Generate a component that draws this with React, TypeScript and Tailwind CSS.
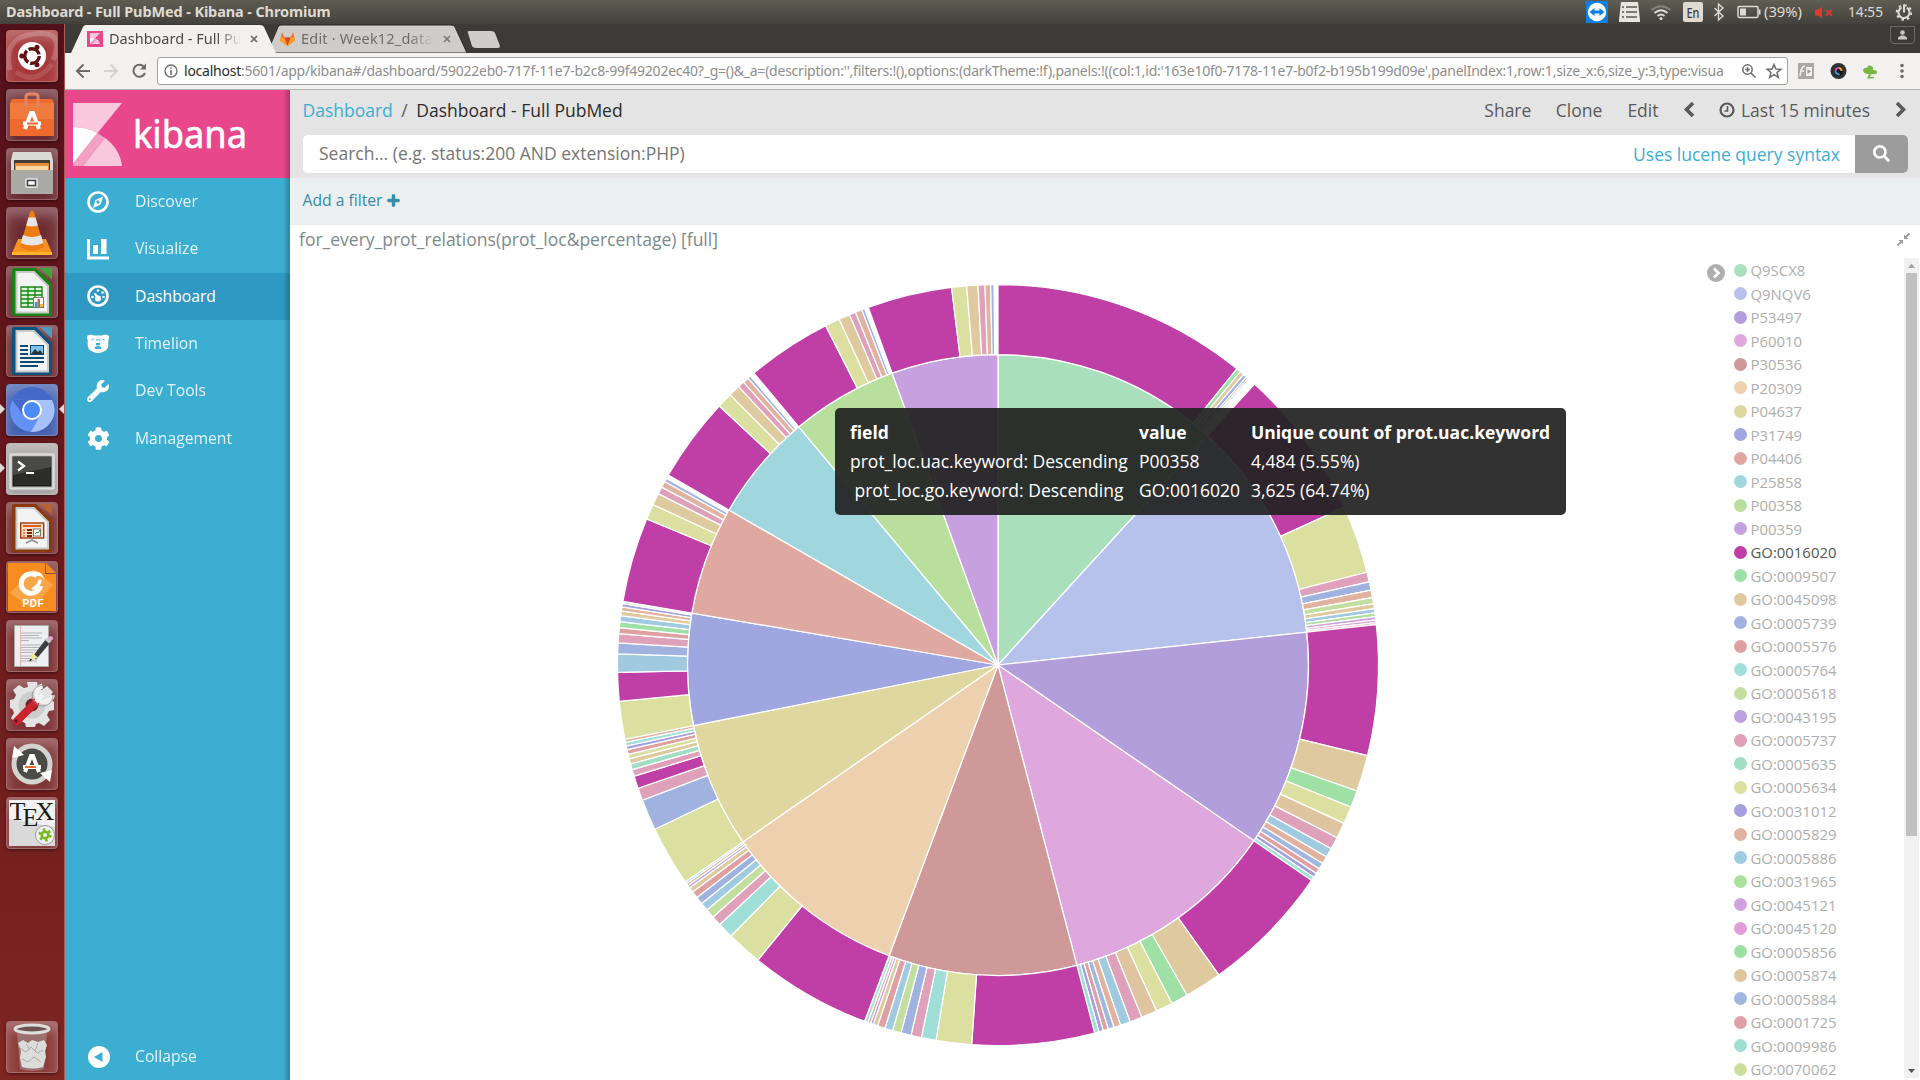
import type { ReactNode } from "react";
import {
  FaWrench,
  FaCog,
  FaPlus,
  FaSearch,
} from "react-icons/fa";

type Pt = [number, number];
type Slice = [string, number, number];

const C = {
  mag: "#bf3fa7",
  green: "#9fe0a6",
  tan: "#dfcaa0",
  blue: "#a0b2df",
  red: "#dfa0a2",
  teal: "#a0dfd8",
  lime: "#c3df9f",
  violet: "#bca0df",
  pink: "#dfa0ba",
  mint: "#a0dfc4",
  olive: "#dbdf9f",
  indigo: "#a49fdf",
  orange: "#dfb3a0",
  sky: "#a0cadf",
  leaf: "#ade09f",
  orchid: "#d1a0df",
  rose: "#dfa0da",
  sand: "#dfc4a0",
  steel: "#a0b8df",
};

/* Directions of the edges between proteins, clockwise from the top. */
const edges: Pt[] = [
  [0, -930], [629, -689], [929, -99], [770, 529], [237, 902], [-327, 873],
  [-766, 531], [-913, 182], [-919, -156], [-807, -465], [-597, -714], [-317, -874],
];

const innerColors = [
  "#a9e0bb", "#b7c2ec", "#b19edb", "#dea8df", "#cf9999", "#edd1ae",
  "#ded79f", "#a0a6df", "#dfa9a1", "#a0d7df", "#b9df9f", "#c6a0df",
];

/* Outer ring: colour and the direction in which the slice ends. */
const outer: Slice[][] = [
  [[C.mag, 714, -885], [C.green, 724.5, -876.5], [C.tan, 734, -868], [C.blue, 742, -860.5], [C.red, 747, -856.5], [C.teal, 751, -852.5]],
  [[C.mag, 850, -387], [C.olive, 1106, -278], [C.pink, 1112, -249], [C.blue, 1117, -224], [C.orange, 1122, -202], [C.lime, 1126, -184], [C.tan, 1128, -169], [C.sky, 1130, -156], [C.leaf, 1132, -145], [C.orchid, 1133, -135], [C.rose, 1133, -127], [C.orange, 1134, -121]],
  [[C.mag, 1108, 272], [C.tan, 1077, 378], [C.green, 1058, 426], [C.olive, 1036, 474], [C.sand, 1015, 517], [C.pink, 997, 550], [C.sky, 984, 575], [C.orange, 973, 595], [C.steel, 963, 611], [C.red, 954, 625], [C.indigo, 946, 636], [C.teal, 939, 646]],
  [[C.mag, 661, 928], [C.tan, 566, 989], [C.green, 521, 1014], [C.olive, 475, 1036], [C.sand, 431, 1056], [C.pink, 396, 1069], [C.sky, 367, 1079], [C.orange, 347, 1085], [C.steel, 330, 1090], [C.red, 315, 1095], [C.indigo, 302, 1098], [C.teal, 289, 1102]],
  [[C.mag, -79, 1138], [C.olive, -186, 1127], [C.teal, -230, 1118], [C.pink, -261, 1111], [C.blue, -291, 1104], [C.lime, -316, 1096], [C.sky, -339, 1089], [C.red, -361, 1082], [C.tan, -374, 1077], [C.violet, -382, 1074], [C.orange, -390, 1071], [C.teal, -398, 1066]],
  [[C.mag, -720, 885], [C.olive, -800, 812], [C.teal, -833, 777], [C.pink, -853, 754], [C.lime, -871, 733], [C.sky, -887, 714], [C.blue, -901, 696], [C.red, -914, 679], [C.tan, -923, 667], [C.violet, -928, 660], [C.orange, -933, 654], [C.teal, -937, 648]],
  [[C.olive, -1028, 492], [C.blue, -1065, 405], [C.pink, -1078, 369], [C.mag, -1090, 333], [C.pink, -1095, 313], [C.mint, -1100, 296], [C.tan, -1104, 281], [C.olive, -1108, 268], [C.red, -1112, 254], [C.indigo, -1114, 243], [C.teal, -1117, 232], [C.orange, -1119, 222]],
  [[C.olive, -1135, 109], [C.mag, -1140, 22], [C.sky, -1140, -33], [C.blue, -1139, -66], [C.pink, -1137, -94], [C.red, -1135, -112], [C.green, -1133, -130], [C.sky, -1131, -148], [C.tan, -1129, -162], [C.orange, -1127, -174], [C.indigo, -1125, -184], [C.leaf, -1124, -189]],
  [[C.mag, -1051, -437], [C.olive, -1032, -480], [C.tan, -1015, -512], [C.pink, -1006, -532], [C.orange, -997, -549], [C.blue, -992, -558]],
  [[C.mag, -834, -775], [C.olive, -801, -808], [C.tan, -775, -832], [C.pink, -760, -845], [C.orange, -747, -857], [C.blue, -740, -863]],
  [[C.mag, -515, -1014], [C.olive, -475, -1034], [C.tan, -444, -1048], [C.pink, -426, -1055], [C.orange, -407, -1062], [C.blue, -399, -1066]],
  [[C.mag, -139, -1131], [C.olive, -94, -1136], [C.tan, -60, -1138], [C.pink, -39, -1139], [C.orange, -22, -1140], [C.blue, -12, -1140]],
];

const legend: [string, string][] = [
  ["Q9SCX8", "#a9e0bb"], ["Q9NQV6", "#b7c2ec"], ["P53497", "#b19edb"], ["P60010", "#dea8df"],
  ["P30536", "#cf9999"], ["P20309", "#edd1ae"], ["P04637", "#ded79f"], ["P31749", "#a0a6df"],
  ["P04406", "#dfa9a1"], ["P25858", "#a0d7df"], ["P00358", "#b9df9f"], ["P00359", "#c6a0df"],
  ["GO:0016020", "#bf3fa7"], ["GO:0009507", "#9fe0a8"], ["GO:0045098", "#dfcaa0"], ["GO:0005739", "#a0b2df"],
  ["GO:0005576", "#dfa0a2"], ["GO:0005764", "#a0dfdc"], ["GO:0005618", "#c3df9f"], ["GO:0043195", "#bca0df"],
  ["GO:0005737", "#dfa0ba"], ["GO:0005635", "#a0dfc4"], ["GO:0005634", "#dbdf9f"], ["GO:0031012", "#a49fdf"],
  ["GO:0005829", "#dfb3a0"], ["GO:0005886", "#a0cadf"], ["GO:0031965", "#ade09f"], ["GO:0045121", "#d1a0df"],
  ["GO:0045120", "#dfa0da"], ["GO:0005856", "#9fdfa4"], ["GO:0005874", "#dfc4a0"], ["GO:0005884", "#a0b8df"],
  ["GO:0001725", "#dfa0a8"], ["GO:0009986", "#a0dfd6"], ["GO:0070062", "#ccdfa0"],
];

function angle(x: number, y: number) {
  const a = Math.atan2(x, -y);
  return a < -1e-9 ? a + Math.PI * 2 : a;
}

function sector(r0: number, r1: number, a0: number, a1: number) {
  const p = (r: number, a: number) => `${(Math.sin(a) * r).toFixed(2)} ${(-Math.cos(a) * r).toFixed(2)}`;
  if (r0 === 0) return `M0 0L${p(r1, a0)}A${r1} ${r1} 0 0 1 ${p(r1, a1)}Z`;
  return `M${p(r0, a0)}L${p(r1, a0)}A${r1} ${r1} 0 0 1 ${p(r1, a1)}L${p(r0, a1)}A${r0} ${r0} 0 0 0 ${p(r0, a0)}Z`;
}

function Pie() {
  const starts = edges.map(([x, y]) => angle(x, y));
  return (
    <svg width="1416" height="824" viewBox="-708 -411 1416 824" className="block">
      <g stroke="#fff" strokeWidth="1.25">
        {starts.map((s, i) => (
          <path key={i} d={sector(0, 310.5, s, i === 11 ? Math.PI * 2 : starts[i + 1])} fill={innerColors[i]} />
        ))}
        {outer.map((group, i) => {
          let a = starts[i];
          return group.map(([color, x, y], j) => {
            const from = a;
            a = angle(x, y);
            return <path key={`${i}-${j}`} d={sector(310.5, 380.5, from, a)} fill={color} />;
          });
        })}
      </g>
    </svg>
  );
}

/* ---------- Launcher ---------- */

function Tile({ children, className = "bg-[#ffffff1c]" }: { children: ReactNode; className?: string }) {
  return (
    <div className={`h-[52px] w-[52px] shrink-0 overflow-hidden rounded-[4px] border border-white/25 shadow-[inset_0_8px_12px_rgba(255,255,255,0.28),0_1px_3px_rgba(0,0,0,0.5)] ${className}`}>
      <svg width="50" height="50" viewBox="1 1 50 50">{children}</svg>
    </div>
  );
}

function OfficeDoc({ dark, light, children }: { dark: string; light: string; children: ReactNode }) {
  return (
    <>
      <path d="M8 2H30L46 18V48a2 2 0 0 1-2 2H8a2 2 0 0 1-2-2V4a2 2 0 0 1 2-2z" fill={dark} />
      <path d="M34 2H46V14z" fill={light} />
      <path d="M10.500 6H28L42 20V46.500H10.500z" fill="#f3f3f3" stroke="#c9c9c9" strokeWidth="2" />
      {children}
    </>
  );
}

function Launcher() {
  return (
    <aside className="relative flex w-[65px] shrink-0 flex-col border-r border-[#a85a55] bg-gradient-to-b from-[#54101a] via-[#6a191c] to-[#7d2622] pb-[7px] pl-[6px] pt-[6px]">
      <div className="flex flex-col gap-[7px]">
        <Tile className="bg-[#a5383a]">
          <path d="M4 40Q-4 8 28 4T47 30" fill="none" stroke="#ffffff30" strokeWidth="5" />
          <path d="M10 42Q30 56 46 34" fill="none" stroke="#ffffff20" strokeWidth="5" />
          <circle cx="26" cy="26" r="14" fill="#fff" />
          <circle cx="26" cy="26" r="7.300" fill="none" stroke="#5e1218" strokeWidth="3.400" strokeDasharray="13.300 2" />
          <circle cx="15.800" cy="26" r="2.500" fill="#5e1218" />
          <circle cx="31" cy="17.200" r="2.500" fill="#5e1218" />
          <circle cx="31" cy="34.800" r="2.500" fill="#5e1218" />
        </Tile>
        <Tile>
          <path d="M4 14L6 10H46L48 14V47H4z" fill="#ee6a2e" />
          <path d="M4 14H48V30H4z" fill="#ef7b3e" />
          <path d="M20 18V9a3 3 0 0 1 3-4h6a3 3 0 0 1 3 4v9" fill="none" stroke="#e58464" strokeWidth="3" />
          <path d="M19 40L25 24h2l6 16M17 34.500h18" fill="none" stroke="#fff" strokeWidth="4" />
          <path d="M21 34.500h11" stroke="#ee6a2e" strokeWidth="2" />
        </Tile>
        <Tile>
          <path d="M7 4H45L47 12V44H5V12z" fill="#d9d9d6" />
          <path d="M8 12H44V24H8z" fill="#423b38" />
          <path d="M9 15H43V22H9z" fill="#e88b38" />
          <path d="M10 18H42V24H10z" fill="#fbd9a2" />
          <path d="M5 22H47V46H5z" fill="#a9a9a6" />
          <rect x="19" y="30" width="13" height="10" rx="2" fill="#ddd" />
          <rect x="21.500" y="32.500" width="8" height="5" fill="#fff" stroke="#444" strokeWidth="1.500" />
        </Tile>
        <Tile>
          <path d="M12 32H40L46 46a2 2 0 0 1-2 2H8a2 2 0 0 1-2-2z" fill="#f7931e" />
          <path d="M6 45H46V48H6z" fill="#ffb42a" />
          <path d="M24 5q2-3 4 0L38 40q-12 7-24 0z" fill="#f07c12" />
          <path d="M22.500 10.500h7l2.300 8q-6 2-11.600 0zM17 28q9 4 18 0l2.300 8q-11 5-22.600 0z" fill="#e6e6e6" />
        </Tile>
        <Tile>
          <OfficeDoc dark="#168413" light="#40a534">
            <rect x="15" y="21" width="21" height="20" fill="#dff5d8" />
            <path d="M15 21H36V41H15zM15 25h21M15 29h21M15 33h21M15 37h21M22 21v20M29 21v20" fill="none" stroke="#168413" strokeWidth="1.300" />
            <rect x="27.500" y="31.500" width="10" height="10" fill="#fff" stroke="#777" />
            <path d="M30 36v5" stroke="#2595e8" strokeWidth="2.500" />
            <path d="M32.700 33v8" stroke="#d8601c" strokeWidth="2.500" />
            <path d="M35.500 38v3" stroke="#e8b51c" strokeWidth="2.500" />
          </OfficeDoc>
        </Tile>
        <Tile>
          <OfficeDoc dark="#0c5382" light="#4f98bf">
            <path d="M14 21h8M14 25h8M14 29h8M14 33h24M14 37h24M14 41h18" stroke="#0b4b76" strokeWidth="1.900" />
            <rect x="24.500" y="20.500" width="13" height="9" fill="#7dc3ea" stroke="#0c4a75" />
            <path d="M25 29l4-5 3 3 2-2 3 4z" fill="#333" />
          </OfficeDoc>
        </Tile>
        <Tile className="bg-[#4561ae]">
          <circle cx="26" cy="26" r="22" fill="#6492f4" />
          <path d="M6 15.500A22 22 0 0 1 46 16H26z" fill="#4469c9" />
          <path d="M6 15.500L17 31 26 16z" fill="#4469c9" />
          <path d="M26 16H46A22 22 0 0 1 25 48L35 30z" fill="#a5c2fb" />
          <circle cx="26" cy="26" r="9" fill="#4b8bf5" stroke="#fff" strokeWidth="2" />
        </Tile>
        <Tile className="bg-[#a9a6a5]">
          <rect x="4" y="11" width="44" height="35" rx="1" fill="#c9c9c7" stroke="#eee" />
          <rect x="7" y="14" width="38" height="29" fill="#2c2c2b" stroke="#111" />
          <path d="M7 14H45V24L7 32z" fill="#4a4a49" />
          <path d="M12 18.500l6 4.500-6 4.500" fill="none" stroke="#fff" strokeWidth="2.200" />
          <path d="M20 30h8" stroke="#fff" strokeWidth="2" />
        </Tile>
        <Tile>
          <OfficeDoc dark="#8a3a0c" light="#b5632f">
            <rect x="14.700" y="21" width="23" height="15" fill="#f8ddcb" stroke="#a03a0c" strokeWidth="1.400" />
            <path d="M17 24h18" stroke="#d8601c" strokeWidth="2" />
            <path d="M17 28h2M17 31h2M17 34h2" stroke="#e06a2c" strokeWidth="1.600" />
            <path d="M21 28h5M21 31h5M21 34h5" stroke="#7a2a06" strokeWidth="1.800" />
            <rect x="27.500" y="27" width="7" height="7" fill="#fff" stroke="#777" />
            <path d="M29 32l2-2 1 1 2-3" stroke="#2a9a2a" fill="none" />
            <path d="M26 36v3M20 41l6-3 6 3" fill="none" stroke="#888" strokeWidth="1.500" />
          </OfficeDoc>
        </Tile>
        <Tile>
          <path d="M2 2H39V13H50V50H2z" fill="#f78d1e" />
          <path d="M4 32L28 8 47 24 26 48z" fill="#f9a54a" />
          <path d="M40 2L50 12H40z" fill="#f78d1e" />
          <circle cx="25" cy="22.500" r="9.800" fill="none" stroke="#fff" strokeWidth="5" strokeDasharray="50 11.600" transform="rotate(14 25 22.500)" />
          <path d="M28 10.500q8-1 10.500 8-3-4-7-3.500z" fill="#fff" />
          <path d="M25 27q5-1 8-9l3 1q-2 8-9 10z" fill="#fff" />
          <text x="27" y="46" textAnchor="middle" fontSize="10" fontWeight="700" fill="#fff" fontFamily="Liberation Sans, sans-serif" textLength="21">PDF</text>
        </Tile>
        <Tile>
          <path d="M8.500 5.500H42.500V46.500H8.500z" fill="#eceef2" stroke="#aaa" />
          <path d="M14.500 6V46" stroke="#e8b8b8" />
          <path d="M15 13h21M15 15.500h18M15 18h21M15 20.500h8M15 25h21M15 27.500h20M15 30h20M15 32.500h12M15 36h12M15 38.500h9M15 41h16" stroke="#a3a3a3" strokeWidth="0.800" />
          <path d="M25.500 38L40 19l4 4-14 16.500z" fill="#3c3c3c" />
          <path d="M23.500 41l3-8 5.500 4.500z" fill="#efe9a0" />
          <path d="M23 41.500l1.500-3 1.800 1.500z" fill="#222" />
          <path d="M39 20l3-2.500 3.500 3.500-2.500 2.500z" fill="#c9c9c9" />
          <path d="M41.500 17.500l3-1.500q3 .5 2.500 3l-2 2z" fill="#e5a5d5" />
        </Tile>
        <Tile>
          <path d="M21 3h10l1 6 4 2 5-4 6 6-4 5 2 4 3 .500V31l-5 1-2 4 3 5-6 6-5-3-3 1-1 3H20l-1-4-4-2-4 3-6-6 3-5-1.500-4-2.500-1V21l4-1 2-4-3-5 6-5 5 3 4-1z" fill="#e3e3e3" />
          <circle cx="26" cy="26" r="10" fill="none" stroke="#cdcdcd" strokeWidth="7" />
          <circle cx="26" cy="26" r="6.500" fill="#6e2426" />
          <path d="M11 42L29 24" stroke="#c9242b" strokeWidth="8" strokeLinecap="round" />
          <path d="M30 23L37 16M36.500 7a8 8 0 1 0 10 9" fill="none" stroke="#f1f1f1" strokeWidth="5" />
          <path d="M39 6.500a10.500 10.500 0 1 0 8 9" fill="none" stroke="#8e8e8e" strokeWidth="0.800" />
          <circle cx="10" cy="42" r="1.700" fill="#6b1115" />
        </Tile>
        <Tile>
          <circle cx="26" cy="26" r="18" fill="#4a4b46" stroke="#d3d3d1" strokeWidth="5" />
          <path d="M6 20L8 8l10 9zM46 32l-2 12-10-9z" fill="#fff" />
          <path d="M19 34L25 18h2l6 16M17 29h18" fill="none" stroke="#fff" strokeWidth="4" />
          <path d="M19 29h11" stroke="#ee6a2e" strokeWidth="2.200" />
        </Tile>
        <Tile>
          <path d="M3 3H49V49H3z" fill="#d9d9d9" />
          <path d="M3 3H49V30L3 22z" fill="#f1f1f1" />
          <text x="3.500" y="23" fontSize="26" fill="#1b1b1b" fontFamily="Liberation Serif, serif">T<tspan x="16.500" dy="6">E</tspan><tspan x="29.500" dy="-6">X</tspan></text>
          <circle cx="39" cy="38" r="9.500" fill="#f1f1f1" stroke="#999" />
          <circle cx="39" cy="38" r="3.300" fill="none" stroke="#79b618" strokeWidth="2.600" />
          <circle cx="39" cy="38" r="5.500" fill="none" stroke="#79b618" strokeWidth="2.400" strokeDasharray="2.500 3.260" />
        </Tile>
      </div>
      <div className="mt-auto">
        <Tile>
          <path d="M11 12L14 48q12 4 24 0l3-36z" fill="#9b6f6d" />
          <path d="M12 22l5-3 5 3 4-3 6 2 6-2 3 5-2 6 1 6-3 10q-10 3-21 0l-2-9 1-7z" fill="#dcdcda" />
          <path d="M14 27l6 4 5-5 6 6 6-3M16 38l6 3 6-5 7 5M20 23l4 6M32 22l-3 8" stroke="#aaa" fill="none" />
          <ellipse cx="26" cy="8" rx="17" ry="4" fill="#6d5452" stroke="#dededd" strokeWidth="3" />
        </Tile>
      </div>
      <svg width="65" height="80" className="absolute left-0 top-[346px]">
        <path d="M0 34l5 5-5 5zM64 34l-5 5 5 5z" fill="#e0d8d8" />
      </svg>
      <svg width="8" height="14" className="absolute left-0 top-[437px]">
        <path d="M0 2l5 5-5 5z" fill="#e0d8d8" />
      </svg>
    </aside>
  );
}

/* ---------- Desktop bar ---------- */

function TopBar() {
  return (
    <div className="flex h-6 w-full shrink-0 items-center bg-gradient-to-b from-[#605d52] to-[#43413c] pl-[6px] font-[Noto_Sans,sans-serif] text-[15px] text-[#dfdbd2]">
      <span className="whitespace-nowrap text-[14.5px] font-bold tracking-[-0.12px]">Dashboard - Full PubMed - Kibana - Chromium</span>
      <svg width="328" height="24" viewBox="1584 0 328 24" className="ml-auto mr-[8px]">
        <rect x="1586" y="1" width="22" height="22" fill="#0d80e4" />
        <circle cx="1597" cy="12" r="9.200" fill="#fff" />
        <path d="M1589.500 12l5-4v2.500h5V8l5 4-5 4v-2.500h-5V16z" fill="#0d80e4" />
        <path d="M1621 2h17l2 18v2h-21v-2z" fill="#e9e6df" />
        <path d="M1622 7h2M1626 7h11M1622 12h2M1626 12h11M1622 17h2M1626 17h11" stroke="#5a5851" strokeWidth="1.500" />
        <g fill="none" stroke="#dfdbd2" strokeWidth="1.800">
          <path d="M1651.500 10q9.500-7.500 19 0" stroke="#85827a" />
          <path d="M1654.500 13q6.500-5.500 13 0M1657.500 16q3.500-3 7 0" />
          <path d="M1714.500 8l8.500 8-4.500 4V4l4.500 4-8.500 8" strokeWidth="1.400" />
        </g>
        <circle cx="1661" cy="18.500" r="1.600" fill="#dfdbd2" />
        <rect x="1683" y="2" width="20" height="20" rx="2" fill="#dfdbd2" />
        <text x="1693" y="17.500" textAnchor="middle" fontSize="14" fontWeight="500" fill="#3c3b37" textLength="13" lengthAdjust="spacingAndGlyphs">En</text>
        <rect x="1738" y="6.500" width="20" height="11" rx="1.500" fill="none" stroke="#dfdbd2" strokeWidth="1.500" />
        <path d="M1740 8.500h6v7h-6zM1759 9.500h1.500v5h-1.500z" fill="#dfdbd2" />
        <text x="1764" y="17" fontSize="14.500" fill="#dfdbd2" textLength="38" lengthAdjust="spacingAndGlyphs">(39%)</text>
        <path d="M1815 9.500h3l4-3v12l-4-3h-3z" fill="#df382c" />
        <path d="M1826 10l6 5.500M1832 10l-6 5.500" stroke="#df382c" strokeWidth="1.800" />
        <text x="1848" y="17" fontSize="14.500" fill="#dfdbd2" textLength="35" lengthAdjust="spacingAndGlyphs">14:55</text>
        <circle cx="1904" cy="12.500" r="5.500" fill="none" stroke="#dfdbd2" strokeWidth="2" strokeDasharray="28.500 6" transform="rotate(-60 1904 12.500)" />
        <circle cx="1904" cy="12.500" r="7.300" fill="none" stroke="#dfdbd2" strokeWidth="2" strokeDasharray="2.500 3.230" />
        <path d="M1904 4.500v8" stroke="#dfdbd2" strokeWidth="2" />
      </svg>
    </div>
  );
}

/* ---------- Browser ---------- */

function KibanaMark({ width, height }: { width: number; height: number }) {
  return (
    <svg width={width} height={height} viewBox="0 0 49 63" preserveAspectRatio="none" className="shrink-0">
      <path d="M0 0H49L24.500 30Q14 24 0 24z" fill="#f9c8dc" />
      <path d="M0 24Q14 24 24.500 30L0 61z" fill="#fff" />
      <path d="M24.500 30L32 35 10 63H0V61z" fill="#f3a0c4" />
      <path d="M32 35Q47 46 49 63H10z" fill="#f9c8dc" />
    </svg>
  );
}

function TabStrip() {
  return (
    <div className="relative flex h-[29px] shrink-0 bg-[#3c3b37] font-[Noto_Sans,sans-serif] text-[14.5px]">
      <svg width="440" height="29" className="absolute left-0 top-0">
        <path d="M202 29L213 3q1-2 3-2H386q3 0 4 2L402 29z" fill="#cfcdca" stroke="#2e2d2a" />
        <path d="M403 9q-1-2 1-2H426q3 0 4 2l5 13q0 2-2 2H411q-3 0-4-2z" fill="#cfcdca" />
        <path d="M6 29L18 3q1-2 3-2H195q3 0 4 2L211 29z" fill="#f2f1f0" />
      </svg>
      <div className="relative flex h-full w-[202px] items-center pl-[22px]">
        <div className="flex h-4 w-4 items-center justify-center bg-[#e8478b]"><KibanaMark width={10} height={11} /></div>
        <span className="ml-[6px] w-[135px] whitespace-nowrap text-[#4a4a48] [mask-image:linear-gradient(to_right,black_80%,transparent_98%)]">Dashboard - Full Pu</span>
        <svg width="8" height="8" className="ml-[6px]"><path d="M1 1l6 6M7 1l-6 6" stroke="#6d6c69" strokeWidth="1.700" /></svg>
      </div>
      <div className="relative flex h-full w-[190px] items-center pl-[12px]">
        <svg width="17" height="16" viewBox="0 0 17 16">
          <path d="M8.500 15L1 9.500 3 1l2.300 5.500h6.400L14 1l2 8.500z" fill="#fc6d26" />
          <path d="M8.500 15L5.300 6.500h6.400z" fill="#e24329" />
          <path d="M1 9.500L2 6.500h3.300L8.500 15zM16 9.500l-1-3h-3.300L8.500 15z" fill="#fca326" />
        </svg>
        <span className="ml-[5px] w-[135px] whitespace-nowrap tracking-[0.2px] text-[#6e6c69] [mask-image:linear-gradient(to_right,black_80%,transparent_98%)]">Edit · Week12_data</span>
        <svg width="8" height="8" className="ml-[7px]"><path d="M1 1l6 6M7 1l-6 6" stroke="#7d7b78" strokeWidth="1.700" /></svg>
      </div>
      <div className="relative ml-auto mr-[5px] mt-[2px] flex h-[18px] w-[25px] items-center justify-center rounded-b-[4px] border border-[#6b6a66]">
        <svg width="11" height="10"><circle cx="5.500" cy="2.500" r="2.300" fill="#c9c7c3" /><path d="M1 9.500V7.500l3-2h3l3 2v2z" fill="#c9c7c3" /></svg>
      </div>
    </div>
  );
}

function Toolbar() {
  return (
    <div className="flex h-[37px] shrink-0 items-center border-b border-[#b6b4b1] bg-[#f2f1f0] pb-[1px]">
      <svg width="92" height="28" fill="none" strokeWidth="2" className="shrink-0">
        <path d="M25 14H12M18.500 7.500L12 14l6.500 6.500" stroke="#6c6b69" />
        <path d="M39 14H52M45.500 7.500L52 14l-6.500 6.500" stroke="#d3d2d0" />
        <path d="M79.500 10.500A6 6 0 1 0 80 16" stroke="#6c6b69" />
        <path d="M81 6.500v6h-6z" fill="#6c6b69" />
      </svg>
      <div className="flex h-[28px] w-[1631px] shrink-0 items-center rounded-[3px] border border-[#a5a3a1] bg-white pl-[6px]">
        <svg width="14" height="14" fill="none" stroke="#6c6b69" strokeWidth="1.300"><circle cx="7" cy="7" r="6" /><path d="M7 6v5M7 3.200v1.500" strokeWidth="1.600" /></svg>
        <div className="ml-[6px] w-[1549px] whitespace-nowrap font-[Noto_Sans,sans-serif] text-[14px] tracking-[-0.235px] text-[#8e8d8b]">
          <span className="text-[#2c2c2a]">localhost</span>
          {":5601/app/kibana#/dashboard/59022eb0-717f-11e7-b2c8-99f49202ec40?_g=()&_a=(description:'',filters:!(),options:(darkTheme:!f),panels:!((col:1,id:'163e10f0-7178-11e7-b0f2-b195b199d09e',panelIndex:1,row:1,size_x:6,size_y:3,type:visua"}
        </div>
        <svg width="44" height="16" fill="none" stroke="#6c6b69" strokeWidth="1.500" className="ml-[8px]">
          <circle cx="6.500" cy="6.500" r="4.700" /><path d="M10 10l4.500 4.500M4 6.500h5M6.500 4v5" />
          <path d="M33 1.500l1.900 4.600 4.900.3-3.800 3.100 1.300 4.800L33 11.600l-4.300 2.700L30 9.500l-3.800-3.100 4.900-.3z" />
        </svg>
      </div>
      <svg width="120" height="20" className="ml-[10px]">
        <rect x="0" y="2" width="16" height="16" fill="#aaa8a5" />
        <path d="M2 15Q3 5 7 5M3 10h3" fill="none" stroke="#f2f1f0" strokeWidth="1.600" />
        <path d="M8 6h6v9H8z" fill="#f2f1f0" />
        <path d="M9.500 8l3.500 2.500-3.500 2.500z" fill="#9a9895" />
        <circle cx="40.500" cy="10" r="8" fill="#2f3236" /><circle cx="40.500" cy="10" r="4.500" fill="#111" />
        <path d="M37.500 10a3 3 0 0 1 3-3" stroke="#d53ad5" strokeWidth="2" fill="none" /><path d="M40.500 7a3 3 0 0 1 3 3" stroke="#e9a52a" strokeWidth="2" fill="none" /><path d="M37.500 10a3 3 0 0 0 4 3" stroke="#29a8e0" strokeWidth="2" fill="none" />
        <path d="M65 9q1-3 4-2 1-4 4-2 3 1 2 4 5 0 4 3-2 2-6 1l-1 3h4v1.500h-7l2-4.500q-6 0-6-4z" fill="#76b843" />
        <circle cx="104" cy="4.500" r="1.800" fill="#6c6b69" /><circle cx="104" cy="10" r="1.800" fill="#6c6b69" /><circle cx="104" cy="15.500" r="1.800" fill="#6c6b69" />
      </svg>
    </div>
  );
}

/* ---------- Kibana ---------- */

const navIcons: Record<string, ReactNode> = {
  Discover: (
    <svg width="22" height="22"><circle cx="11" cy="11" r="9.500" fill="none" stroke="#fff" strokeWidth="2.600" /><path d="M16 5.500l-2.500 8-7.500 3.500 2.500-8z" fill="#fff" /><circle cx="11" cy="11" r="1.700" fill="#3caed2" /></svg>
  ),
  Visualize: (
    <svg width="22" height="22" fill="#fff"><path d="M0 1h3v17.500h19V21.500H0zM6 7h5v9H6zM14 1h5.500v15H14z" /></svg>
  ),
  Dashboard: (
    <svg width="22" height="22" fill="#fff"><circle cx="11" cy="11" r="9.500" fill="none" stroke="#fff" strokeWidth="2.600" /><circle cx="11" cy="13.500" r="3" /><path d="M6.500 8.500l2-.5 4.500 5-2 2z" /><circle cx="11" cy="5.500" r="1.300" /><circle cx="15.500" cy="7.500" r="1.300" /><circle cx="16.500" cy="12" r="1.300" /><circle cx="5.500" cy="12" r="1.300" /></svg>
  ),
  Timelion: (
    <svg width="22" height="20"><path d="M0 2.500Q0 1 2 1q3-.8 5 .5h8q2-1.300 5-.5 2 0 2 1.500v2.500l-.700 1v6q-.500 3.500-4.500 5.500-3 1.500-5.800 1.500t-5.800-1.500Q1.200 15.500.7 12V6L0 5z" fill="#fff" /><path d="M9 6h4M4.500 6l2-1M15.500 5l2 1" stroke="#3caed2" strokeWidth="1" /><path d="M7.500 15q0-3 3.500-3t3.500 3z" fill="#3caed2" /><rect x="9" y="9" width="4" height="2.300" fill="#3caed2" /></svg>
  ),
  "Dev Tools": <FaWrench size={22} />,
  Management: <FaCog size={23} />,
};

function Sidebar() {
  return (
    <nav className="relative flex w-[225px] shrink-0 flex-col bg-[#3caed2] font-[Open_Sans,sans-serif] text-[15.7px] text-white">
      <div className="flex h-[88px] shrink-0 items-center bg-[#e8478b] pl-2">
        <KibanaMark width={49} height={63} />
        <svg width="140" height="70" className="ml-[10px]">
          <text x="1" y="49" fontSize="38" fill="#fff" stroke="#fff" strokeWidth="0.600" fontFamily="Noto Sans, sans-serif" textLength="114" lengthAdjust="spacingAndGlyphs">kibana</text>
        </svg>
      </div>
      {Object.keys(navIcons).map((name) => (
        <div key={name} className={`flex h-[47.4px] shrink-0 items-center pl-[22px] ${name === "Dashboard" ? "bg-[#3099c3]" : ""}`}>
          <span className="flex w-[48px]">{navIcons[name]}</span>
          <span className={name === "Dashboard" ? "" : "opacity-85"}>{name}</span>
        </div>
      ))}
      <div className="mt-auto flex h-[47px] items-center pl-[23px]">
        <svg width="22" height="22" className="mr-[25px]"><circle cx="11" cy="11" r="11" fill="#fff" /><path d="M14.500 6v10L6 11z" fill="#3caed2" /></svg>
        <span className="opacity-85">Collapse</span>
      </div>
      <div className="absolute inset-y-0 right-0 w-[7px] bg-gradient-to-r from-transparent to-black/25" />
    </nav>
  );
}

function Header() {
  return (
    <div className="flex h-[88px] shrink-0 flex-col bg-[#e4e4e4] text-[17.5px] text-[#5a5a5a]">
      <div className="flex h-[45px] items-center pb-[5px] pl-[12.5px]">
        <span className="text-[#3caed2]">Dashboard</span>
        <span className="mx-[8.5px]">/</span>
        <span className="text-[#2d2d2d]">Dashboard - Full PubMed</span>
        <span className="ml-auto">Share</span>
        <span className="ml-[24.5px]">Clone</span>
        <span className="ml-[25px]">Edit</span>
        <svg width="12" height="18" className="ml-[25px]"><path d="M10 2L3.500 8.500 10 15" fill="none" stroke="#5a5a5a" strokeWidth="3.600" /></svg>
        <svg width="16" height="16" fill="none" stroke="#5a5a5a" className="ml-[24px]"><circle cx="8" cy="8" r="6.500" strokeWidth="2.200" /><path d="M8.500 4v5H5.500" strokeWidth="1.600" /></svg>
        <span className="ml-[5.5px]">Last 15 minutes</span>
        <svg width="12" height="18" className="ml-[25px] mr-[13px]"><path d="M2 2l6.500 6.500L2 15" fill="none" stroke="#5a5a5a" strokeWidth="3.600" /></svg>
      </div>
      <div className="ml-[13px] mr-3 flex h-[38px] overflow-hidden rounded-[5px] bg-white">
        <span className="flex items-center pb-[2px] pl-[16px] text-[#757575]">Search... (e.g. status:200 AND extension:PHP)</span>
        <span className="ml-auto flex items-center pr-[15px] text-[#3caed2]">Uses lucene query syntax</span>
        <span className="flex w-[53px] items-center justify-center bg-[#9c9c9c] pb-[1px] text-white"><FaSearch size={17} /></span>
      </div>
    </div>
  );
}

function Tooltip() {
  return (
    <div className="absolute left-[545px] top-[154px] h-[107px] w-[731px] rounded-[5px] bg-[#222222]/93 px-[15px] pt-[10px] text-[17.5px] text-white">
      <div className="grid grid-cols-[279px_102px_300px] gap-x-[10px] whitespace-nowrap leading-[29px]">
        <b>field</b>
        <b>value</b>
        <b>Unique count of prot.uac.keyword</b>
        <span>prot_loc.uac.keyword: Descending</span>
        <span>P00358</span>
        <span>4,484 (5.55%)</span>
        <span className="pl-[4.500px]">prot_loc.go.keyword: Descending</span>
        <span>GO:0016020</span>
        <span>3,625 (64.74%)</span>
      </div>
    </div>
  );
}

function Panel() {
  return (
    <div className="flex min-h-0 flex-1 flex-col bg-white">
      <div className="flex h-[29px] shrink-0 items-center pl-[9px] pr-[10px] text-[17.5px] text-[#7b8a8e]">
        for_every_prot_relations(prot_loc&amp;percentage) [full]
        <svg width="13" height="13" className="ml-auto"><path d="M12.500.5L8 5M.5 12.500L5 8" stroke="#999ca0" strokeWidth="1.800" /><path d="M7 1.500V6h4.500zM6 11.500V7H1.500z" fill="#999ca0" /></svg>
      </div>
      <div className="relative flex min-h-0 flex-1 overflow-hidden">
        <div className="w-[1416px] shrink-0"><Pie /></div>
        <div className="ml-[1px] mt-[10px] w-[18px] shrink-0">
          <svg width="18" height="18" className="block"><circle cx="9" cy="9" r="9" fill="#aeaeae" /><path d="M7 4.500L11.500 9 7 13.500" fill="none" stroke="#fff" strokeWidth="2.600" /></svg>
        </div>
        <div className="ml-[9px] flex-1 pt-[4.500px]">
          {legend.map(([name, color]) => (
            <div key={name} className="flex h-[23.5px] items-center gap-[3.5px]">
              <span className="h-[13px] w-[13px] rounded-full" style={{ backgroundColor: color }} />
              <span className={`text-[14.9px] ${name === "GO:0016020" ? "text-[#555]" : "text-[#aeaeae]"}`}>{name}</span>
            </div>
          ))}
        </div>
        <div className="mb-[2px] mr-[1px] mt-[4px] flex w-[15px] shrink-0 flex-col items-center bg-[#f1f1f1]">
          <svg width="15" height="15" className="shrink-0"><path d="M4 10l3.500-4.500L11 10z" fill="#a3a3a3" /></svg>
          <div className="h-[563px] w-[11px] bg-[#c1c1c1]" />
          <svg width="15" height="15" className="mt-auto shrink-0"><path d="M4 6l3.500 4L11 6z" fill="#505050" /></svg>
        </div>
        <Tooltip />
      </div>
    </div>
  );
}

export default function App() {
  return (
    <div className="flex h-[1080px] w-[1920px] flex-col overflow-hidden bg-white">
      <TopBar />
      <div className="flex min-h-0 flex-1">
        <Launcher />
        <div className="flex min-w-0 flex-1 flex-col">
          <TabStrip />
          <Toolbar />
          <div className="flex min-h-0 flex-1">
            <Sidebar />
            <main className="flex min-w-0 flex-1 flex-col font-[Open_Sans,sans-serif]">
              <Header />
              <div className="flex h-[47px] shrink-0 items-center bg-[#ebeff0] pb-[2px] pl-[12.5px] text-[15.7px] text-[#328caa]">
                Add a filter
                <FaPlus size={13} className="ml-[4px]" stroke="currentColor" strokeWidth={40} />
              </div>
              <Panel />
            </main>
          </div>
        </div>
      </div>
    </div>
  );
}
